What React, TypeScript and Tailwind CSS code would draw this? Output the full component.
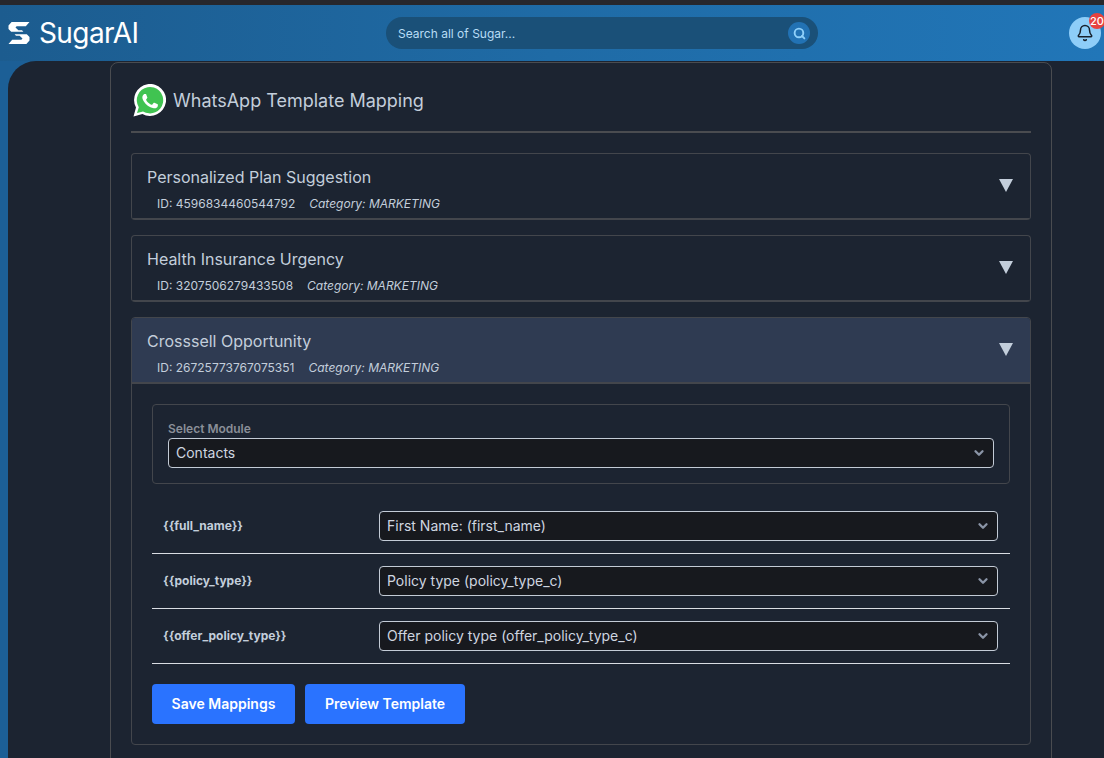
import { Bell, ChevronDown, Search } from "lucide-react";

const font = { fontFamily: "Inter, 'Liberation Sans', sans-serif" };

const templates = [
  { name: "Personalized Plan Suggestion", id: "4596834460544792" },
  { name: "Health Insurance Urgency", id: "3207506279433508" },
];

const mappings = [
  { tag: "{{full_name}}", value: "First Name: (first_name)" },
  { tag: "{{policy_type}}", value: "Policy type (policy_type_c)" },
  { tag: "{{offer_policy_type}}", value: "Offer policy type (offer_policy_type_c)" },
];

const logoPiece = "M3.6 0H21.5L17.8 4.2H8.6L7.5 5.4L10.4 8.2H14L15.4 9.8H3.2L0.5 6.9V3.4Z";

function Logo() {
  return (
    <svg width="22" height="22" viewBox="0 0 22 22" fill="#fff">
      <path d={logoPiece} />
      <path d={logoPiece} transform="rotate(180 11 11)" />
    </svg>
  );
}

function WhatsAppIcon() {
  return (
    <svg width="33" height="33" viewBox="0 0 33 33">
      <path d="M0.5 32.5L3 23.6A16 16 0 1 1 9.4 30Z" fill="#fff" />
      <path d="M4 29L5.8 23.2A13.2 13.2 0 1 1 10 27.4Z" fill="#40c351" />
      <path
        d="M12.2 8.6c-.4-.9-.8-.9-1.2-.9h-1c-.4 0-.9.1-1.4.7-.5.5-1.8 1.8-1.8 4.3s1.9 5 2.1 5.3c.3.3 3.6 5.7 8.9 7.8 4.4 1.7 5.3 1.4 6.2 1.3 1-.1 3.1-1.3 3.5-2.5.4-1.2.4-2.3.3-2.5-.1-.2-.5-.4-1-.6l-3.6-1.8c-.5-.2-.8-.3-1.2.3-.4.5-1.4 1.8-1.7 2.1-.3.4-.6.4-1.2.1-.5-.3-2.2-.8-4.2-2.6-1.6-1.4-2.6-3.1-2.9-3.7-.3-.5 0-.8.2-1.1l.8-.9c.3-.3.4-.5.5-.9.2-.3.1-.7 0-.9l-1.6-3.9z"
        fill="#fff"
        transform="translate(4.3 4.2) scale(.74)"
      />
    </svg>
  );
}

function SelectBox({ value }: { value: string }) {
  return (
    <div className="flex h-[30px] items-center justify-between rounded-[4px] border border-[#c3cbd6] bg-[#17191e] pl-[7px] pr-[7px] text-[14px] text-[#cfd6e0]">
      <span className="pb-[2px]">{value}</span>
      <ChevronDown size={14} strokeWidth={4} className="text-[#8a94a6]" />
    </div>
  );
}

function TemplateHeader({ name, id, open }: { name: string; id: string; open?: boolean }) {
  return (
    <div className={`flex h-[66px] items-center justify-between border-b-2 border-[#43464c] pl-[15px] pr-[17px] ${open ? "bg-[#2f3b52]" : ""}`}>
      <div className="pt-[7px]">
        <div className="text-[16px] leading-[20px] text-[#c3cedb]">{name}</div>
        <div className="mt-[9px] flex gap-[14px] pl-[10px] text-[12px] leading-[16px] text-[#c3cedb]">
          <span>ID: {id}</span>
          <span className="italic">Category: MARKETING</span>
        </div>
      </div>
      <div className="mb-[2px] h-0 w-0 border-x-[7px] border-t-[13px] border-x-transparent border-t-[#c3cedb]" />
    </div>
  );
}

export default function App() {
  return (
    <div style={font} className="flex h-[758px] w-[1104px] flex-col overflow-hidden bg-[#1c5f96]">
      <div className="h-[5px] shrink-0 bg-[#27272c]" />
      <header className="flex h-[56px] shrink-0 items-center bg-gradient-to-r from-[#1c5c8f] via-[#1f6ba6] to-[#2176b8] pl-[8px] pr-[3px]">
        <div className="flex w-[378px] items-center gap-[9px]">
          <Logo />
          <span className="text-[28px] font-normal tracking-[-0.6px] text-white">SugarAI</span>
        </div>
        <div className="flex h-[32px] w-[432px] items-center justify-between rounded-full bg-[#1a5078] pl-[12px] pr-[8px] text-[12px] text-[#b8dcf5]">
          <span className="pt-[1px]">Search all of Sugar...</span>
          <span className="flex h-[22px] w-[22px] items-center justify-center rounded-full bg-[#2272b4]">
            <Search size={13} strokeWidth={3.5} className="text-[#8fd0fa]" />
          </span>
        </div>
        <div className="relative ml-auto flex h-[32px] w-[32px] items-center justify-center rounded-full bg-[#8ecdf8]">
          <Bell size={18} strokeWidth={2} className="text-[#17202c]" />
          <span className="absolute right-[-4px] top-[-4px] flex h-[16px] w-[16px] items-center justify-center rounded-full bg-[#e8423f] text-[11px] font-medium text-white">
            20
          </span>
        </div>
      </header>
      <main className="ml-[8px] min-h-0 flex-1 rounded-tl-[28px] bg-[#1c2431] pl-[102px] pt-[1px]">
        <div className="w-[942px] rounded-t-[8px] border border-[#4a4c50] px-[20px] pb-[20px]">
          <div className="flex h-[70px] items-center gap-[7px] border-b-2 border-[#4a4c50] pl-[2px] pt-[7px]">
            <WhatsAppIcon />
            <h1 className="text-[18px] font-normal text-[#c3cedb]">WhatsApp Template Mapping</h1>
          </div>
          <div className="mt-[20px] flex flex-col gap-[15px]">
            {templates.map((t) => (
              <div key={t.id} className="overflow-hidden rounded-[4px] border border-b-0 border-[#43464c]">
                <TemplateHeader name={t.name} id={t.id} />
              </div>
            ))}
            <div className="overflow-hidden rounded-[4px] border border-[#43464c]">
              <TemplateHeader name="Crosssell Opportunity" id="26725773767075351" open />
              <div className="px-[20px] pb-[20px] pt-[20px]">
                <div className="rounded-[4px] border border-[#43464c] px-[15px] pb-[15px] pt-[15px]">
                  <div className="text-[12px] font-semibold leading-[18px] text-[#8a8f98]">Select Module</div>
                  <SelectBox value="Contacts" />
                </div>
                <div className="mt-[15px]">
                  {mappings.map((m) => (
                    <div key={m.tag} className="flex h-[55px] items-center border-b border-[#d9dde3] pl-[11px] pr-[12px]">
                      <div className="w-[216px] text-[12px] font-bold text-[#c3cedb]">{m.tag}</div>
                      <div className="flex-1">
                        <SelectBox value={m.value} />
                      </div>
                    </div>
                  ))}
                </div>
                <div className="mt-[20px] flex gap-[10px]">
                  <button className="h-[40px] w-[143px] rounded-[4px] bg-[#2a73ff] pb-[2px] text-[14px] font-semibold text-white">Save Mappings</button>
                  <button className="h-[40px] w-[160px] rounded-[4px] bg-[#2a73ff] pb-[2px] text-[14px] font-semibold text-white">Preview Template</button>
                </div>
              </div>
            </div>
          </div>
        </div>
      </main>
    </div>
  );
}
